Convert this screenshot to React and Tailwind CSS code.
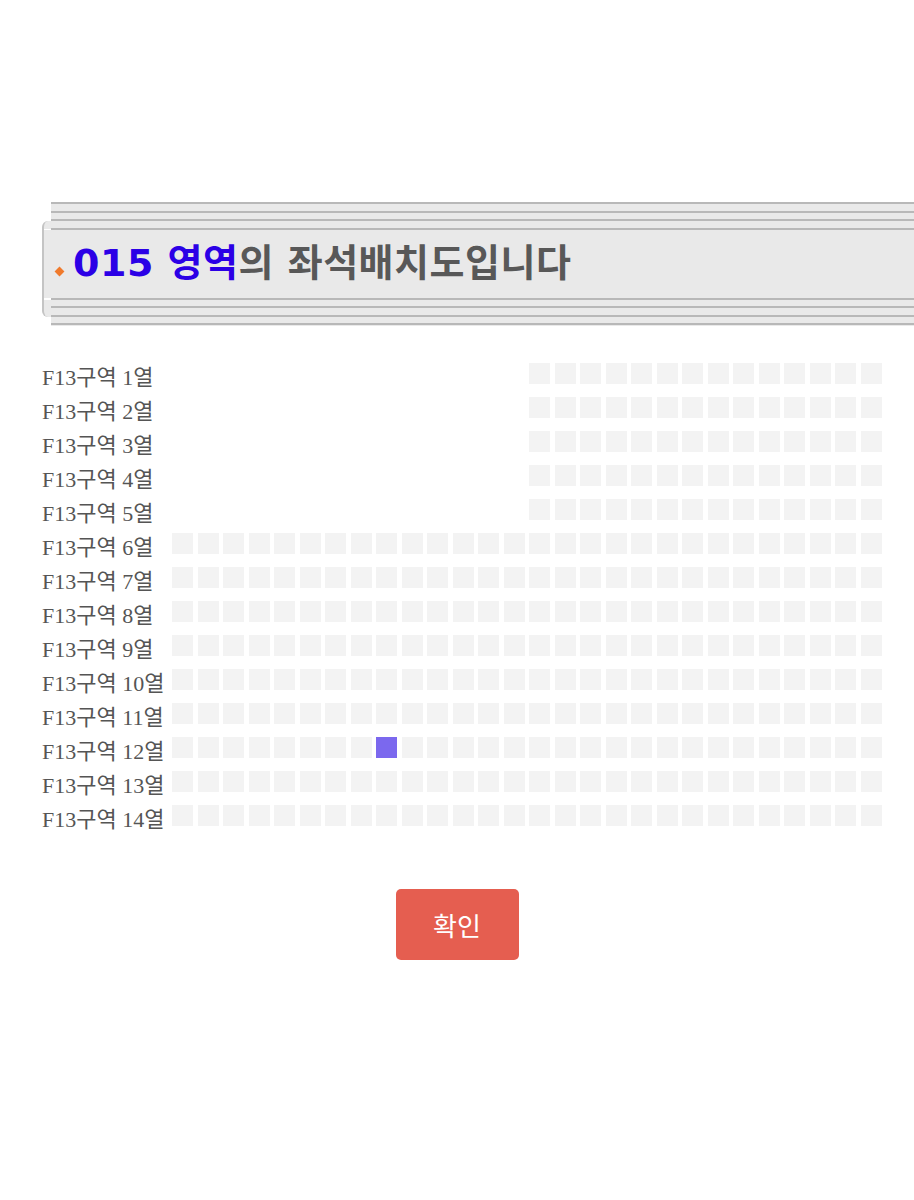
import React from 'react';

const ROWS = 14;
const COLS = 28;
const SELECTED = { row: 12, col: 9 };

function Seat({ on, empty }) {
  if (empty) return <div className="w-[21px] h-[21px]" />;
  return (
    <div
      className={`w-[21px] h-[21px] ${on ? 'bg-[#7b68ee]' : 'bg-[#f3f3f3]'}`}
    />
  );
}

function Stripe() {
  return <div className="h-[2px] bg-[#b8b8b8]" />;
}

function Header() {
  return (
    <div className="relative ml-[42px] h-[124px] overflow-hidden">
      {/* left bracket piece */}
      <div className="absolute left-0 top-[19px] h-[96px] w-[10px] rounded-l-[6px] border-l-2 border-[#c4c4c4] bg-[#e9e9e9]" />
      <div className="absolute left-[2px] top-[27px] h-[6px] w-[7px] bg-white" />
      <div className="absolute left-[2px] top-[92px] h-[6px] w-[7px] bg-white" />

      <div className="relative ml-[9px] flex flex-col bg-[#e9e9e9]">
        <Stripe />
        <div className="h-[7px]" />
        <Stripe />
        <div className="h-[6px]" />
        <Stripe />
        <div className="h-[7px]" />
        <Stripe />
        <div className="h-[68px] flex items-center -ml-[9px] bg-[#e9e9e9] border-l-2 border-[#c4c4c4]">
          <span className="ml-[12px] mr-[10px] mt-[14px] inline-block w-[7px] h-[7px] rotate-45 bg-[#f07a2c]" />
          <h1
            className="text-[38px] font-bold leading-none tracking-[0.5px] text-[#585858] mb-[2px]"
            style={{ fontFamily: '"DejaVu Sans", "Noto Sans CJK KR", sans-serif' }}
          >
            <span className="text-[#2b00e6]">015 영역</span>의 좌석배치도입니다
          </h1>
        </div>
        <Stripe />
        <div className="h-[6px]" />
        <Stripe />
        <div className="h-[7px]" />
        <Stripe />
        <div className="h-[6px]" />
        <Stripe />
        <div className="h-[1px]" />
      </div>
    </div>
  );
}

export default function App() {
  const rows = Array.from({ length: ROWS }, (_, i) => i + 1);
  const cols = Array.from({ length: COLS }, (_, i) => i + 1);

  return (
    <div className="min-h-[1200px] bg-white pt-[202px]">
      <Header />

      <div className="mt-[34px] ml-[42px] flex flex-col">
        {rows.map((r) => (
          <div key={r} className="flex h-[34px] items-start">
            <div
              className="w-[130px] shrink-0 pt-[3px] text-[22px] leading-[30px] text-[#555555] whitespace-nowrap"
              style={{ fontFamily: '"Liberation Serif", "Noto Sans CJK KR", serif' }}
            >
              F13구역 {r}열
            </div>
            <div className="mt-[3px] grid grid-cols-[repeat(28,21px)] gap-x-[4.5px]">
              {cols.map((c) => (
                <Seat
                  key={c}
                  empty={r <= 5 && c <= 14}
                  on={r === SELECTED.row && c === SELECTED.col}
                />
              ))}
            </div>
          </div>
        ))}
      </div>

      <div className="mt-[53px] flex justify-center">
        <button
          className="w-[123px] h-[71px] rounded-[5px] bg-[#e55e50] text-white text-[26px]"
          style={{ fontFamily: '"Noto Sans CJK KR", sans-serif' }}
        >
          확인
        </button>
      </div>
    </div>
  );
}
